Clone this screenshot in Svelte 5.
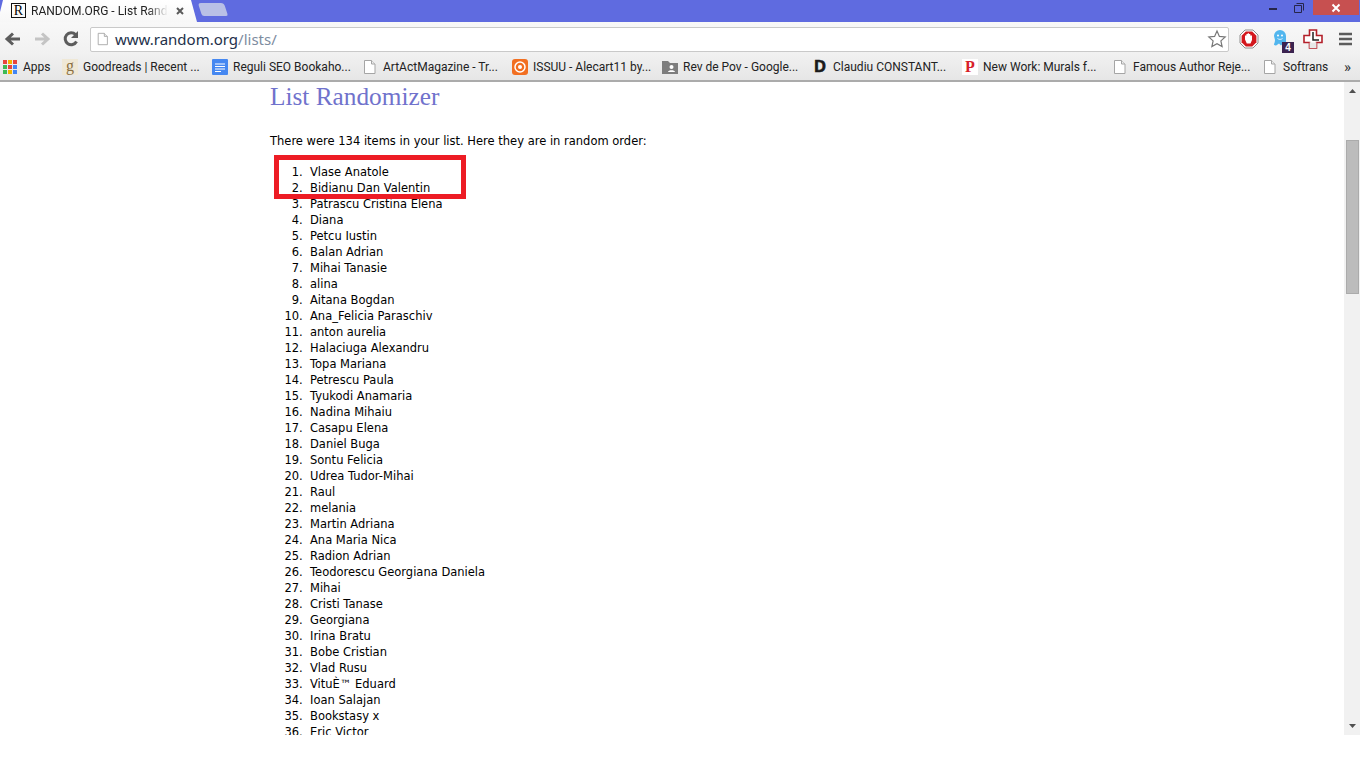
<script>
  const bookmarks = [
    { icon: "apps", label: "Apps", width: 60 },
    { icon: "goodreads", label: "Goodreads | Recent ...", width: 150 },
    { icon: "docs", label: "Reguli SEO Bookaho...", width: 150 },
    { icon: "page", label: "ArtActMagazine - Tr...", width: 150 },
    { icon: "issuu", label: "ISSUU - Alecart11 by...", width: 150 },
    { icon: "drive", label: "Rev de Pov - Google...", width: 150 },
    { icon: "d", label: "Claudiu CONSTANT...", width: 150 },
    { icon: "p", label: "New Work: Murals f...", width: 150 },
    { icon: "page", label: "Famous Author Reje...", width: 150 },
    { icon: "page", label: "Softrans", width: 70 }
  ];

  const names = [
    "Vlase Anatole", "Bidianu Dan Valentin", "Patrascu Cristina Elena", "Diana",
    "Petcu Iustin", "Balan Adrian", "Mihai Tanasie", "alina", "Aitana Bogdan",
    "Ana_Felicia Paraschiv", "anton aurelia", "Halaciuga Alexandru", "Topa Mariana",
    "Petrescu Paula", "Tyukodi Anamaria", "Nadina Mihaiu", "Casapu Elena", "Daniel Buga",
    "Sontu Felicia", "Udrea Tudor-Mihai", "Raul", "melania", "Martin Adriana",
    "Ana Maria Nica", "Radion Adrian", "Teodorescu Georgiana Daniela", "Mihai",
    "Cristi Tanase", "Georgiana", "Irina Bratu", "Bobe Cristian", "Vlad Rusu",
    "VituÈ™ Eduard", "Ioan Salajan", "Bookstasy x", "Eric Victor"
  ];
</script>

{#snippet pageIcon()}
  <svg width="16" height="16" viewBox="0 0 16 16">
    <path d="M2.500 1.500h7l3.500 3.500v9.500h-10.500z" fill="#fff" stroke="#a5a5a5" />
    <path d="M9.500 1.500v3.500h3.500" fill="#eee" stroke="#a5a5a5" />
  </svg>
{/snippet}

<div class="window">
  <header class="tabstrip">
    <div class="tab">
      <span class="favicon">R</span>
      <span class="tab-title">RANDOM.ORG - List Rand</span>
      <svg class="tab-close" width="8" height="8" viewBox="0 0 8 8">
        <path d="M1 1l6 6M7 1l-6 6" stroke="#5a5a5a" stroke-width="2" />
      </svg>
    </div>
    <div class="newtab"></div>
    <div class="window-controls">
      <svg width="30" height="16" viewBox="0 0 30 16">
        <rect x="16" y="8" width="8" height="2" fill="#26264a" />
      </svg>
      <svg width="30" height="16" viewBox="0 0 30 16">
        <path d="M11.500 5.500h7v7h-7z" fill="none" stroke="#26264a" />
        <path d="M13.500 3.500h7v7" fill="none" stroke="#26264a" stroke-width="1" />
      </svg>
      <div class="close-btn">
        <svg width="10" height="10" viewBox="0 0 10 10">
          <path d="M1.500 1.500l7 7M8.500 1.500l-7 7" stroke="#fff" stroke-width="2" />
        </svg>
      </div>
    </div>
  </header>

  <div class="toolbar">
    <svg class="nav" width="20" height="20" viewBox="0 0 20 20">
      <path d="M17 10H5M10 4.500 4 10l6 5.500" fill="none" stroke="#5c5c5c" stroke-width="3" />
    </svg>
    <svg class="nav" width="20" height="20" viewBox="0 0 20 20">
      <path d="M3 10h12M10 4.500l6 5.500-6 5.500" fill="none" stroke="#c4c4c4" stroke-width="3" />
    </svg>
    <svg class="nav" width="20" height="20" viewBox="0 0 20 20">
      <path d="M15.500 12.500A6 6 0 1 1 14.500 5.500" fill="none" stroke="#5c5c5c" stroke-width="3" />
      <path d="M17 2v7h-7z" fill="#5c5c5c" />
    </svg>
    <div class="omnibox">
      <span class="omni-icon">{@render pageIcon()}</span>
      <span class="url">www.random.org<span class="url-path">/lists/</span></span>
      <svg class="star" width="20" height="20" viewBox="0 0 20 20">
        <path d="M10 2l2.400 5.400 5.800.6-4.300 3.900 1.200 5.700-5.100-2.900-5.100 2.900 1.200-5.700L1.800 8l5.800-.6z" fill="#fff" stroke="#777" stroke-width="1.200" />
      </svg>
    </div>
    <div class="extensions">
      <svg width="20" height="20" viewBox="0 0 20 20">
        <path d="M6 1h8l5 5v8l-5 5H6l-5-5V6z" fill="#fff" stroke="#8e8e8e" />
        <path d="M6.800 2.600h6.400l4.200 4.200v6.400l-4.200 4.200H6.800l-4.200-4.200V6.800z" fill="#d3171d" />
        <path d="M6 10.500V6.500h1.400V5h1.300v-.8h1.300V5h1.300v1.500h1.700v4.500l-1.500 3.500H7.800z" fill="#fff" />
      </svg>
      <div class="ghost">
        <svg width="20" height="22" viewBox="0 0 20 22">
          <path d="M3 8a6 6 0 0 1 12 0v8c0 1-.7 1.500-1.500.8l-1.500-1.300-2 2-2-2-2.500 1.700c-1 .7-3-.1-2.500-1.200.5-1 1-2.500 1-4z" fill="#52b6ee" />
          <circle cx="7" cy="7.500" r="1" fill="#fff" />
          <circle cx="11" cy="7.500" r="1" fill="#fff" />
          <path d="M6.500 10.500c1.500 1.200 3.500 1.200 5 0" fill="none" stroke="#fff" stroke-width=".8" />
        </svg>
        <span class="ghost-badge">4</span>
      </div>
      <svg width="20" height="20" viewBox="0 0 20 20">
        <path d="M6.500 1h7v5.500H19v7h-5.500V19h-7v-5.500H1v-7h5.500z" fill="#fff" stroke="#b3202a" stroke-width="1.600" />
        <path d="M6.500 13.500H13.500V19h-7z" fill="#e8e8e8" />
        <path d="M10 3v8h6" fill="none" stroke="#222" stroke-width="1.500" />
      </svg>
    </div>
    <svg class="menu" width="14" height="14" viewBox="0 0 14 14">
      <path d="M0 2h13M0 7h13M0 12h13" stroke="#5c5c5c" stroke-width="2.400" />
    </svg>
  </div>

  <nav class="bookmarks">
    {#each bookmarks as b}
      <div class="bookmark" style="width: {b.width}px">
        {#if b.icon === "apps"}
          <svg width="16" height="16" viewBox="0 0 16 16">
            <rect x="1" y="1" width="4" height="4" fill="#e8453c" />
            <rect x="6" y="1" width="4" height="4" fill="#f4b400" />
            <rect x="11" y="1" width="4" height="4" fill="#e8453c" />
            <rect x="1" y="6" width="4" height="4" fill="#3cba54" />
            <rect x="6" y="6" width="4" height="4" fill="#e8453c" />
            <rect x="11" y="6" width="4" height="4" fill="#4285f4" />
            <rect x="1" y="11" width="4" height="4" fill="#3cba54" />
            <rect x="6" y="11" width="4" height="4" fill="#f4b400" />
            <rect x="11" y="11" width="4" height="4" fill="#4285f4" />
          </svg>
        {:else if b.icon === "goodreads"}
          <span class="ico-g">g</span>
        {:else if b.icon === "docs"}
          <svg width="16" height="16" viewBox="0 0 16 16">
            <rect width="16" height="16" rx="1" fill="#4688f1" />
            <path d="M3 5h10M3 7.500h10M3 10h10M3 12.500h6" stroke="#fff" />
          </svg>
        {:else if b.icon === "page"}
          {@render pageIcon()}
        {:else if b.icon === "issuu"}
          <svg width="16" height="16" viewBox="0 0 16 16">
            <rect width="16" height="16" rx="3" fill="#f26f21" />
            <circle cx="8" cy="8" r="5" fill="none" stroke="#fff" stroke-width="1.500" />
            <circle cx="8" cy="8" r="2" fill="#fff" />
          </svg>
        {:else if b.icon === "drive"}
          <svg width="16" height="16" viewBox="0 0 16 16">
            <path d="M0 2h6l2 2h8v11H0z" fill="#7d7d7d" />
            <circle cx="9.500" cy="8" r="2" fill="#fff" />
            <path d="M6 13c0-2.500 7-2.500 7 0z" fill="#fff" />
          </svg>
        {:else if b.icon === "d"}
          <span class="ico-d">D</span>
        {:else if b.icon === "p"}
          <span class="ico-p">P</span>
        {/if}
        <span class="bookmark-label">{b.label}</span>
      </div>
    {/each}
    <span class="more">»</span>
  </nav>

  <div class="viewport">
    <main class="page">
      <h2>List Randomizer</h2>
      <p>There were 134 items in your list. Here they are in random order:</p>
      <ol>
        {#each names as name}
          <li>{name}</li>
        {/each}
      </ol>
      <div class="highlight"></div>
    </main>
    <div class="scrollbar">
      <svg width="16" height="15" viewBox="0 0 16 15"><path d="M5 11l3.500-4 3.500 4z" fill="#505050" /></svg>
      <div class="track"><div class="thumb"></div></div>
      <svg width="16" height="15" viewBox="0 0 16 15"><path d="M5 4l3.500 4L12 4z" fill="#505050" /></svg>
    </div>
  </div>
</div>

<style>
  :global(body) {
    background: #fff;
  }
  .window {
    width: 1360px;
    height: 768px;
    display: flex;
    flex-direction: column;
    overflow: hidden;
    font-family: Roboto, "Liberation Sans", sans-serif;
  }

  .tabstrip {
    height: 22px;
    background: #5f6be0;
    display: flex;
    align-items: flex-start;
    flex: none;
  }
  .tab {
    width: 197px;
    height: 22px;
    background: linear-gradient(#fff, #f7f7f7);
    clip-path: polygon(0 55%, 3px 0, 191px 0, 197px 100%, 0 100%);
    display: flex;
    align-items: center;
    padding: 0 0 1px 11px;
    box-sizing: border-box;
    flex: none;
  }
  .favicon {
    width: 13px;
    height: 13px;
    border: 1px solid #111;
    font: 14px/14px "Liberation Serif", serif;
    text-align: center;
    flex: none;
    margin-right: 5px;
  }
  .tab-title {
    width: 137px;
    font-size: 12px;
    white-space: nowrap;
    overflow: hidden;
    color: #222;
    mask-image: linear-gradient(to right, #000 85%, transparent);
    flex: none;
  }
  .tab-close {
    margin-left: 8px;
    flex: none;
  }
  .newtab {
    width: 26px;
    height: 13px;
    margin: 3px 0 0 3px;
    background: #b9c0e6;
    border-radius: 3px 3px 2px 2px;
    transform: skewX(18deg);
    box-sizing: border-box;
    flex: none;
  }
  .window-controls {
    margin-left: auto;
    display: flex;
    align-items: flex-start;
    margin-right: 1px;
  }
  .close-btn {
    width: 46px;
    height: 15px;
    background: #c75050;
    display: flex;
    align-items: center;
    justify-content: center;
  }

  .toolbar {
    height: 31px;
    background: linear-gradient(#f8f8f8, #f1f1f1);
    display: flex;
    align-items: center;
    flex: none;
    padding: 3px 0 0 3px;
    box-sizing: border-box;
  }
  .nav {
    margin-right: 9px;
    flex: none;
  }
  .omnibox {
    width: 1139px;
    height: 25px;
    background: #fff;
    border: 1px solid #c9c9c9;
    border-radius: 2px;
    box-sizing: border-box;
    display: flex;
    align-items: center;
    padding-left: 5px;
    flex: none;
  }
  .omni-icon {
    display: flex;
    width: 14px;
    flex: none;
  }
  .url {
    margin-left: 5px;
    font-size: 15px;
    color: #23304a;
    font-family: "Noto Sans", sans-serif;
  }
  .url-path {
    color: #7d8ca0;
  }
  .star {
    margin-left: auto;
    margin-right: 1px;
  }
  .extensions {
    display: flex;
    align-items: center;
    gap: 12px;
    margin-left: 10px;
  }
  .ghost {
    position: relative;
    width: 20px;
    height: 22px;
  }
  .ghost-badge {
    position: absolute;
    right: -3px;
    bottom: -3px;
    width: 12px;
    height: 11px;
    background: #3b2350;
    color: #fff;
    font: bold 10px/11px "Liberation Sans", sans-serif;
    text-align: center;
  }
  .menu {
    margin-left: 16px;
  }

  .bookmarks {
    height: 27px;
    background: linear-gradient(#f1f1f1, #e6e6e6);
    border-bottom: 2px solid #ababab;
    display: flex;
    align-items: center;
    flex: none;
    padding-left: 2px;
  }
  .bookmark {
    display: flex;
    align-items: center;
    gap: 5px;
    flex: none;
    height: 20px;
    font-size: 12px;
    color: #222;
    white-space: nowrap;
    overflow: hidden;
  }
  .ico-g {
    width: 16px;
    height: 16px;
    background: #efe8d6;
    color: #8a6f3f;
    font: 16px/14px "Liberation Serif", serif;
    text-align: center;
    flex: none;
  }
  .ico-d {
    width: 16px;
    height: 16px;
    color: #1a1a1a;
    font: bold 16px/16px "Liberation Sans", sans-serif;
    -webkit-text-stroke: 0.7px #1a1a1a;
    text-align: center;
    flex: none;
  }
  .ico-p {
    width: 16px;
    height: 16px;
    background: #fff;
    color: #d7202a;
    font: bold 16px/16px "Liberation Serif", serif;
    text-align: center;
    flex: none;
  }
  .more {
    margin-left: auto;
    margin-right: 9px;
    font-size: 15px;
    color: #333;
  }

  .viewport {
    height: 653px;
    display: flex;
    overflow: hidden;
    flex: none;
  }
  .page {
    position: relative;
    flex: 1;
    padding-left: 270px;
    overflow: hidden;
    font: 11.5px/16px "DejaVu Sans", Verdana, sans-serif;
    color: #000;
  }
  h2 {
    margin: 0;
    font: 400 25.3px/28px "Liberation Serif", Georgia, serif;
    color: #7072cc;
  }
  p {
    margin: 23px 0 0;
  }
  ol {
    margin: 15px 0 0;
    padding-left: 40px;
  }
  li::marker {
    content: counter(list-item) ".  ";
  }
  .highlight {
    position: absolute;
    left: 274px;
    top: 73px;
    width: 192px;
    height: 44px;
    box-sizing: border-box;
    border: 5px solid #ed1c24;
  }

  .scrollbar {
    width: 16px;
    background: #f1f1f1;
    display: flex;
    flex-direction: column;
    flex: none;
  }
  .track {
    flex: 1;
    padding: 43px 1px 0 2px;
  }
  .thumb {
    height: 154px;
    background: #bcbcbc;
    border: 1px solid #ababab;
    box-sizing: border-box;
  }
</style>
